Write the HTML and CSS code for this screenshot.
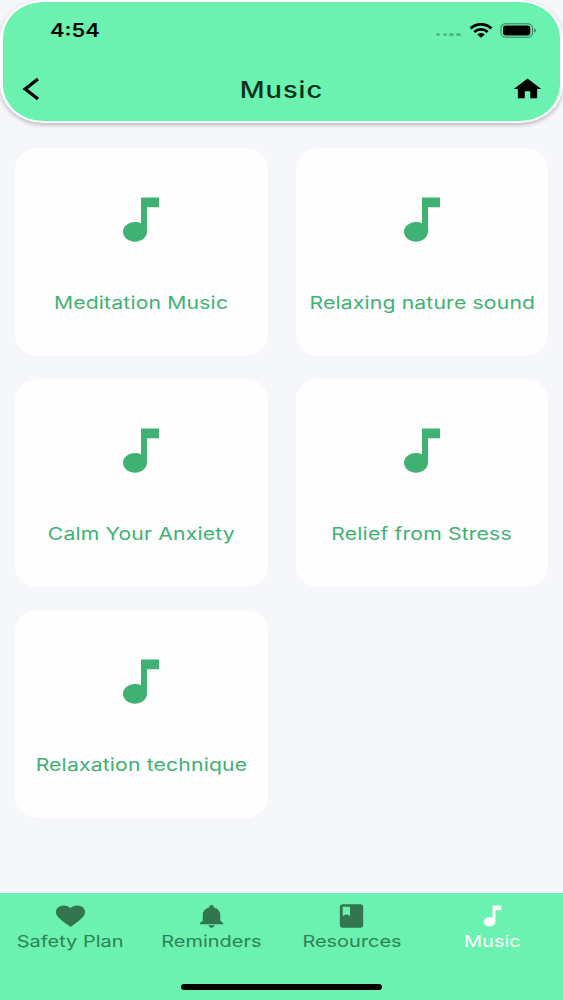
FILE: index.html
```html
<!DOCTYPE html>
<html lang="en">
<head>
    <meta charset="utf-8">
    <title>Music</title>
    <link rel="stylesheet" href="styles.css">
</head>
<body>
    <svg class="sprite">
        <symbol id="note" viewBox="0 0 24 24" preserveAspectRatio="none">
            <path d="M12 3v10.55c-.59-.34-1.27-.55-2-.55-2.21 0-4 1.79-4 4s1.79 4 4 4 4-1.79 4-4V7h4V3h-6z"/>
        </symbol>
    </svg>

    <header class="header">
        <div class="status-bar">
            <span class="wide time">4:54</span>
            <div class="status-icons">
                <div class="dots"><i></i><i></i><i></i><i></i></div>
                <svg class="wifi" viewBox="0 0 24 15" preserveAspectRatio="none">
                    <path d="M1.6 5.4C7.3.1 16.7.1 22.4 5.4M5.3 9C9 5.6 15 5.6 18.7 9" fill="none" stroke="#000" stroke-width="2.8"/>
                    <path d="M8.2 11.6c2-2.1 5.6-2.1 7.6 0L12 14.8z"/>
                </svg>
                <svg class="battery" viewBox="0 0 37 15">
                    <rect x="1" y=".8" width="31.5" height="13.4" rx="4.5" ry="3.8" fill="none" stroke="#000" stroke-opacity=".5"/>
                    <rect x="3" y="2.6" width="27.3" height="9.8" rx="2.8" ry="2.4"/>
                    <path d="M34.3 5.3c1.9.7 1.9 3.7 0 4.4z" fill-opacity=".6"/>
                </svg>
            </div>
        </div>
        <div class="title-bar">
            <svg class="back" viewBox="0 0 18 24">
                <path d="M16 2L3.2 12 16 22" fill="none" stroke="#000" stroke-width="3.3"/>
            </svg>
            <h1 class="wide">Music</h1>
            <svg class="home" viewBox="0 0 24 24" preserveAspectRatio="none">
                <path d="M10 20v-6h4v6h5v-8h3L12 3 2 12h3v8z"/>
            </svg>
        </div>
    </header>

    <main class="grid">
        <div class="card">
            <svg><use href="#note"/></svg>
            <span class="wide">Meditation Music</span>
        </div>
        <div class="card">
            <svg><use href="#note"/></svg>
            <span class="wide">Relaxing nature sound</span>
        </div>
        <div class="card">
            <svg><use href="#note"/></svg>
            <span class="wide">Calm Your Anxiety</span>
        </div>
        <div class="card">
            <svg><use href="#note"/></svg>
            <span class="wide">Relief from Stress</span>
        </div>
        <div class="card">
            <svg><use href="#note"/></svg>
            <span class="wide">Relaxation technique</span>
        </div>
    </main>

    <footer class="footer">
        <nav class="tabs">
            <div class="tab">
                <svg viewBox="0 0 24 24" preserveAspectRatio="none"><path d="M12 21.35l-1.45-1.32C5.4 15.36 2 12.28 2 8.5 2 5.42 4.42 3 7.5 3c1.74 0 3.41.81 4.5 2.09C13.09 3.81 14.76 3 16.5 3 19.58 3 22 5.42 22 8.5c0 3.78-3.4 6.86-8.55 11.54L12 21.35z"/></svg>
                <span class="wide">Safety Plan</span>
            </div>
            <div class="tab">
                <svg viewBox="0 0 24 24" preserveAspectRatio="none"><path d="M12 22c1.1 0 2-.9 2-2h-4c0 1.1.89 2 2 2zm6-6v-5c0-3.07-1.64-5.64-4.5-6.32V4c0-.83-.67-1.5-1.5-1.5s-1.5.67-1.5 1.5v.68C7.63 5.36 6 7.92 6 11v5l-2 2v1h16v-1l-2-2z"/></svg>
                <span class="wide">Reminders</span>
            </div>
            <div class="tab">
                <svg viewBox="0 0 24 24" preserveAspectRatio="none"><path d="M18 2H6c-1.1 0-2 .9-2 2v16c0 1.1.9 2 2 2h12c1.1 0 2-.9 2-2V4c0-1.1-.9-2-2-2zM6 4h5v8l-2.5-1.5L6 12V4z"/></svg>
                <span class="wide">Resources</span>
            </div>
            <div class="tab active">
                <svg><use href="#note"/></svg>
                <span class="wide">Music</span>
            </div>
        </nav>
        <div class="home-indicator"></div>
    </footer>
</body>
</html>
```

FILE: styles.css
```css
* {
    box-sizing: border-box;
}
body {
    margin: 0;
    height: 1000px;
    display: flex;
    flex-direction: column;
    background: #f6f7fb;
    font-family: Inter, "Liberation Sans", sans-serif;
    overflow: hidden;
}
svg {
    display: block;
    flex: none;
}
.sprite {
    width: 0;
    height: 0;
    position: absolute;
}
/* stretched lettering */
.wide {
    display: inline-block;
    white-space: nowrap;
    transform: scaleX(1.21);
}
.header {
    height: 122.5px;
    border: 3px solid #fff;
    border-top-width: 2px;
    border-bottom-width: 2.5px;
    border-radius: 43px / 38px;
    background: #6bf1b0;
    box-shadow: 0 2px 4px rgba(0, 0, 0, 0.25);
}
.status-bar {
    height: 56px;
    padding: 0 23.5px 0 47px;
    display: flex;
    justify-content: space-between;
    align-items: center;
}
.time {
    transform-origin: left;
    font-size: 18px;
    font-weight: 600;
}
.status-icons {
    display: flex;
    align-items: center;
}
.dots {
    display: flex;
    gap: 2.5px;
    margin: 9px 8px 0 0;
}
.dots i {
    width: 4.3px;
    height: 3.6px;
    border-radius: 50%;
    background: #4fb888;
}
.wifi {
    width: 24px;
    height: 15px;
    margin-right: 7px;
}
.battery {
    width: 37px;
    height: 15px;
}
.title-bar {
    height: 62px;
    padding: 0 16px 0 19px;
    display: flex;
    justify-content: space-between;
    align-items: center;
}
.back {
    width: 18px;
    height: 24px;
}
.title-bar h1 {
    margin: 0 0 0 11px;
    font-size: 22.5px;
    font-weight: 450;
    letter-spacing: 0.8px;
    color: #06301a;
}
.home {
    width: 33px;
    height: 28px;
}
.grid {
    flex: 1;
    display: grid;
    grid-template-columns: 253px 252px;
    grid-auto-rows: 207.5px;
    gap: 23.5px 28.5px;
    padding: 25.5px 14.5px 0;
}
.card {
    display: flex;
    flex-direction: column;
    align-items: center;
    padding-top: 42px;
    border-radius: 24px / 20px;
    background: #fefefe;
    color: #3fb173;
    font-size: 17.5px;
    letter-spacing: 0.13px;
    line-height: 22px;
}
.card svg {
    width: 72px;
    height: 59px;
    margin-bottom: 42.5px;
    fill: #3fb172;
}
.footer {
    height: 107px;
    display: flex;
    flex-direction: column;
    align-items: center;
    background: #6bf1b0;
}
.tabs {
    width: 100%;
    height: 91px;
    display: flex;
}
.tab {
    flex: 1;
    display: flex;
    flex-direction: column;
    align-items: center;
    padding-top: 9px;
    font-size: 16.5px;
    line-height: 22px;
    color: #2f8255;
    fill: #33754f;
}
.tab svg {
    width: 35px;
    height: 28px;
}
.tab.active {
    color: #fff;
    fill: #fff;
}
.home-indicator {
    width: 201px;
    height: 6px;
    border-radius: 3px;
    background: #000;
}
```
